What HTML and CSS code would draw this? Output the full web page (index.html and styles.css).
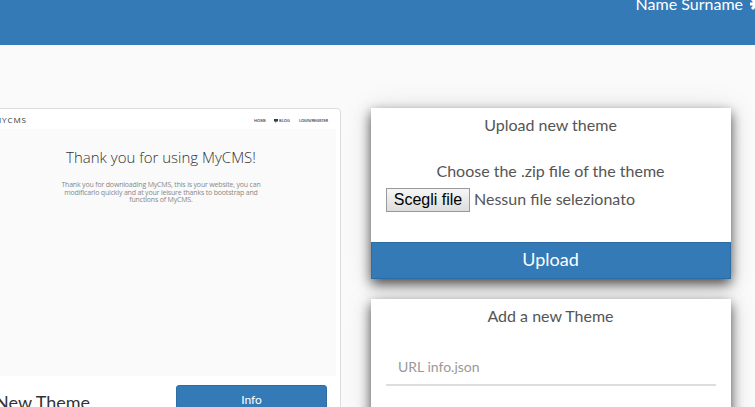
FILE: index.html
```html
<!DOCTYPE html>
<html lang="en">
<head>
<meta charset="utf-8">
<title>Themes</title>
<link rel="stylesheet" href="styles.css">
</head>
<body>
<header class="topbar">
  <span class="user">Name Surname</span>
  <svg class="gear" width="14" height="14" viewBox="0 0 14 14"><g stroke="#fff" stroke-width="3"><path d="M7 0v14M0 7h14M2 2l10 10M12 2L2 12"/></g><circle cx="7" cy="7" r="4.8" fill="#fff"/><circle cx="7" cy="7" r="2" fill="#337ab7"/></svg>
</header>
<main class="columns">
  <section class="theme">
    <div class="preview">
      <div class="site-nav">
        <span class="brand">MYCMS</span>
        <nav class="links"><span class="home">HOME</span><span class="blog"><svg width="4" height="4" viewBox="0 0 4 4"><path d="M0 0h4v2.5H2.5L1.5 4V2.5H0z" fill="#2c3e50"/></svg>BLOG</span><span class="login">LOGIN/REGISTER</span></nav>
      </div>
      <div class="site-body">
        <h1>Thank you for using MyCMS!</h1>
        <p><span>Thank you for downloading MyCMS, this is your website, you can</span><span>modificarlo quickly and at your leisure thanks to bootstrap and</span><span>functions of MyCMS.</span></p>
      </div>
    </div>
    <div class="caption">
      <h2>New Theme</h2>
      <button class="info">Info</button>
    </div>
  </section>
  <aside class="side">
    <section class="panel">
      <h3>Upload new theme</h3>
      <p class="hint">Choose the .zip file of the theme</p>
      <div class="file"><button class="choose">Scegli file</button><span>Nessun file selezionato</span></div>
      <button class="upload">Upload</button>
    </section>
    <section class="panel tall">
      <h3>Add a new Theme</h3>
      <input class="url" type="text" placeholder="URL info.json">
    </section>
  </aside>
</main>
</body>
</html>
```
FILE: styles.css
```css
* { box-sizing: border-box; }
html, body { height: 100%; }
body { margin: 0; overflow: hidden; background: #fafafa; color: #555; font: 16px/21px Lato, sans-serif; }
h1, h2, h3, p { margin: 0; font-weight: 400; }
button { font-family: inherit; }
.topbar { height: 45px; width: 764px; background: #337ab7; color: #fff; display: flex; justify-content: flex-end; align-items: flex-start; gap: 7px; }
.user { font-size: 16px; line-height: 20px; margin-top: -6px; }
.gear { margin-top: -3px; flex: none; }
.columns { display: grid; grid-template-columns: 360px 360px; gap: 30px; height: 299px; margin: 63px 0 0 -19px; }
.theme { height: 400px; padding: 4px; background: #fff; border: 1px solid #ddd; border-radius: 4px; }
.preview { height: 263px; background: #fafafa; font-family: "Open Sans", sans-serif; }
.site-nav { height: 16px; background: #fff; display: flex; justify-content: space-between; align-items: flex-start; padding: 0 9px 0 8px; color: #333; }
.brand { font-size: 8px; line-height: 14px; letter-spacing: .9px; }
.links { display: flex; font-size: 4px; line-height: 16px; color: #2c3e50; font-weight: 600; }
.home { width: 20px; }
.blog { width: 25px; display: flex; align-items: center; gap: 1px; }
.login { width: 28px; white-space: nowrap; letter-spacing: -.25px; }
.site-body { text-align: center; color: #333; }
.site-body h1 { padding-top: 17px; font-size: 15px; line-height: 22px; font-weight: 300; }
.site-body p { display: flex; flex-direction: column; padding-top: 13px; font-size: 7px; line-height: 7.6px; letter-spacing: -.18px; color: #888; }
.caption { display: flex; justify-content: space-between; padding: 9px 9px; }
.caption h2 { padding-top: 7px; font-size: 18px; line-height: 20px; color: #333; }
.info { width: 151px; height: 30px; padding: 0 0 2px; background: #337ab7; border: 1px solid #2e6da4; border-radius: 3px; color: #fff; font-size: 12px; }
.side { display: flex; flex-direction: column; gap: 20px; }
.panel { flex: none; height: 171px; display: flex; flex-direction: column; background: #fff; box-shadow: 0 5px 12px rgba(0,0,0,.7), 0 0 30px rgba(0,0,0,.08); }
.tall { height: 200px; }
.panel h3, .hint { font-size: 16px; line-height: 21px; text-align: center; }
.panel h3 { padding: 6px 1px 0 0; }
.hint { padding: 25px 1px 0 0; }
.file { display: flex; align-items: center; gap: 4px; padding: 7px 15px 0; }
.file span { margin-top: -3px; }
.choose { width: 84px; height: 24px; padding: 0; border: 1px solid #999; background: linear-gradient(#f6f6f6, #ddd); color: #000; font: 16px "Liberation Sans", sans-serif; }
.upload { margin-top: auto; height: 37px; padding: 0 1px 3px 0; border: 1px solid #2e6da4; background: #337ab7; color: #fff; font-size: 18px; }
.url { height: 38px; margin: 22px 15px 0; padding: 0 12px; border: 0; border-bottom: 2px solid #ddd; background: #fff; font: 14px Lato, sans-serif; }
.url::placeholder { color: #999; }
```
